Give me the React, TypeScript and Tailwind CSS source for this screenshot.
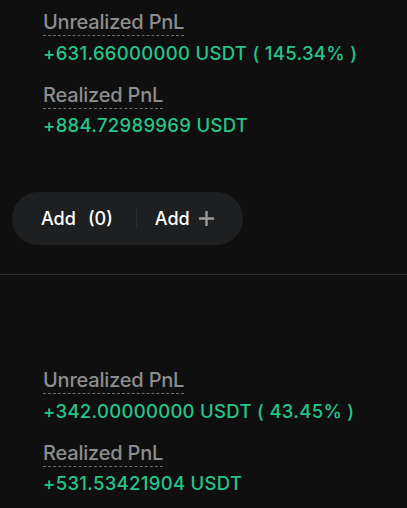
import React from "react";

interface PnlProps {
  unrealized: string;
  percent: string;
  realized: string;
}

const Label = ({ children }: { children: React.ReactNode }) => (
  <span className="inline-block text-[20px] leading-[24px] font-medium tracking-[-0.2px] text-[#8d8d8d] border-b border-dashed border-[#6e6e6e] pb-[1px]">
    {children}
  </span>
);

const Value = ({ children, className = "" }: { children: React.ReactNode; className?: string }) => (
  <div className={`text-[18.5px] leading-[24px] font-medium tracking-[0.3px] text-[#26c489] ${className}`}>
    {children}
  </div>
);

const PnlBlock = ({ unrealized, percent, realized }: PnlProps) => (
  <div className="flex flex-col pl-[43px]">
    <div>
      <Label>Unrealized PnL</Label>
    </div>
    <Value className="mt-[5px]">
      {unrealized} USDT ( {percent} )
    </Value>
    <div className="mt-[18px]">
      <Label>Realized PnL</Label>
    </div>
    <Value className="mt-[4px]">{realized} USDT</Value>
  </div>
);

const App = () => {
  return (
    <div
      className="w-full min-h-screen bg-[#0f0f10] overflow-hidden"
      style={{ fontFamily: "Inter, 'Liberation Sans', sans-serif" }}
    >
      <div className="pt-[10px]">
        <PnlBlock unrealized="+631.66000000" percent="145.34%" realized="+884.72989969" />
      </div>

      <div className="pl-[12px] mt-[55px]">
        <div className="inline-flex items-center h-[53px] rounded-full bg-[#1e1f21] pl-[29px] pr-[29px]">
          <span className="text-[18px] font-medium text-white">Add</span>
          <span className="text-[18px] font-medium text-white ml-[12px]">(0)</span>
          <span className="w-px h-[20px] bg-[#2c2d30] ml-[23px] mr-[18px]" />
          <span className="text-[18px] font-medium text-white">Add</span>
          <svg width="15" height="15" viewBox="0 0 15 15" className="ml-[9px]">
            <path d="M7.5 0v15M0 7.5h15" stroke="#9a9a9a" strokeWidth="2.4" />
          </svg>
        </div>
      </div>

      <div className="h-px bg-[#2e2e2f] mt-[29px]" />

      <div className="pt-[93px]">
        <PnlBlock unrealized="+342.00000000" percent="43.45%" realized="+531.53421904" />
      </div>
    </div>
  );
};

export default App;
